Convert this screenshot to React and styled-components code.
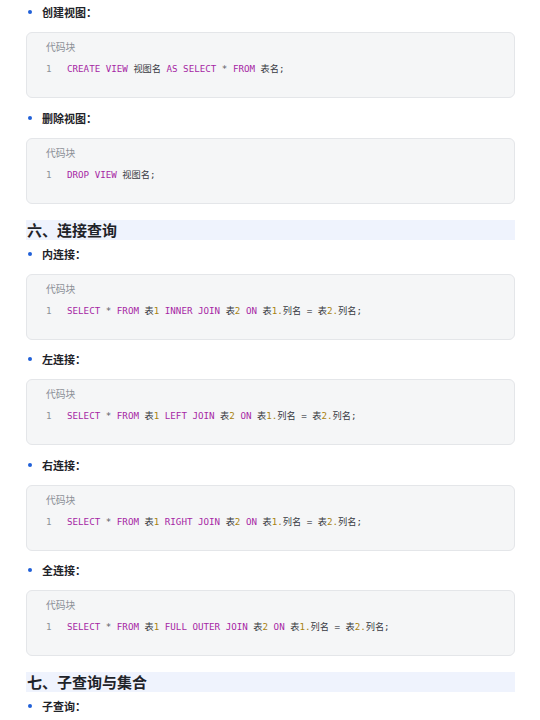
import React from "react";
import styled, { createGlobalStyle } from "styled-components";

const KW = "kw";
const NUM = "num";
const OP = "op";

// each code line is a list of [kind, text] tokens
const t = (kind, text) => ({ kind, text });

const CONTENT = [
  {
    type: "item",
    title: "创建视图：",
    code: [t(KW, "CREATE VIEW"), t(null, " 视图名 "), t(KW, "AS SELECT"), t(OP, " * "), t(KW, "FROM"), t(null, " 表名;")],
  },
  {
    type: "item",
    title: "删除视图：",
    code: [t(KW, "DROP VIEW"), t(null, " 视图名;")],
  },
  { type: "heading", title: "六、连接查询" },
  { type: "item", title: "内连接：", join: "INNER JOIN" },
  { type: "item", title: "左连接：", join: "LEFT JOIN" },
  { type: "item", title: "右连接：", join: "RIGHT JOIN" },
  { type: "item", title: "全连接：", join: "FULL OUTER JOIN" },
  { type: "heading", title: "七、子查询与集合" },
  { type: "item", title: "子查询：" },
];

const joinLine = (join) => [
  t(KW, "SELECT"),
  t(OP, " * "),
  t(KW, "FROM"),
  t(null, " 表"),
  t(NUM, "1"),
  t(null, " "),
  t(KW, join),
  t(null, " 表"),
  t(NUM, "2"),
  t(null, " "),
  t(KW, "ON"),
  t(null, " 表"),
  t(NUM, "1."),
  t(null, "列名"),
  t(OP, " = "),
  t(null, "表"),
  t(NUM, "2."),
  t(null, "列名;"),
];

export default function App() {
  return (
    <>
      <GlobalStyle />
      <Page>
        {CONTENT.map((block, i) => {
          if (block.type === "heading") {
            return <Heading key={i}>{block.title}</Heading>;
          }
          const code = block.join ? joinLine(block.join) : block.code;
          return (
            <Item key={i}>
              <Bullet>{block.title}</Bullet>
              {code && (
                <CodeBlock>
                  <CodeLabel>代码块</CodeLabel>
                  <CodeLine>
                    <LineNo>1</LineNo>
                    <code>
                      {code.map((tok, j) => (
                        <Token key={j} $kind={tok.kind}>
                          {tok.text}
                        </Token>
                      ))}
                    </code>
                  </CodeLine>
                </CodeBlock>
              )}
            </Item>
          );
        })}
      </Page>
    </>
  );
}

// Styled Components
const GlobalStyle = createGlobalStyle`
  body {
    margin: 0;
    background: #ffffff;
    font-family: "Noto Sans CJK SC", "Noto Sans", sans-serif;
    color: #1f2329;
  }
`;

const Page = styled.div`
  padding: 2px 25px 0 26px;
  display: flex;
  flex-direction: column;
`;

const Item = styled.div`
  margin-bottom: 9.5px;
`;

const Bullet = styled.div`
  position: relative;
  height: 20px;
  line-height: 20px;
  padding-left: 16px;
  font-size: 11px;
  font-weight: 700;
  color: #1f2329;

  &::before {
    content: "";
    position: absolute;
    left: 2px;
    top: 8px;
    width: 4px;
    height: 4px;
    border-radius: 50%;
    background: #2060d8;
  }
`;

const CodeBlock = styled.div`
  margin-top: 10px;
  height: 66px;
  box-sizing: border-box;
  padding: 8px 20px 0 19px;
  background: #f5f6f7;
  border: 1px solid #e4e6e9;
  border-radius: 6px;
`;

const CodeLabel = styled.div`
  height: 12px;
  line-height: 12px;
  font-size: 9.8px;
  color: #8b8f96;
  margin-bottom: 8px;
`;

const CodeLine = styled.div`
  display: flex;
  height: 16px;
  line-height: 16px;
  font-family: "DejaVu Sans Mono", "Noto Sans CJK SC", monospace;
  font-size: 9.2px;
  color: #383a42;
  white-space: pre;

  code {
    font-family: inherit;
  }
`;

const LineNo = styled.span`
  width: 21px;
  color: #8b8f96;
`;

const Token = styled.span`
  color: ${({ $kind }) =>
    $kind === "kw" ? "#a626a4" : $kind === "num" ? "#a8820f" : $kind === "op" ? "#5c5f66" : "#383a42"};
`;

const Heading = styled.h2`
  margin: 6.5px 0 4px;
  height: 20px;
  line-height: 20px;
  padding-left: 1px;
  font-size: 15px;
  font-weight: 700;
  color: #1f2329;
  background: #eff3fd;
`;
